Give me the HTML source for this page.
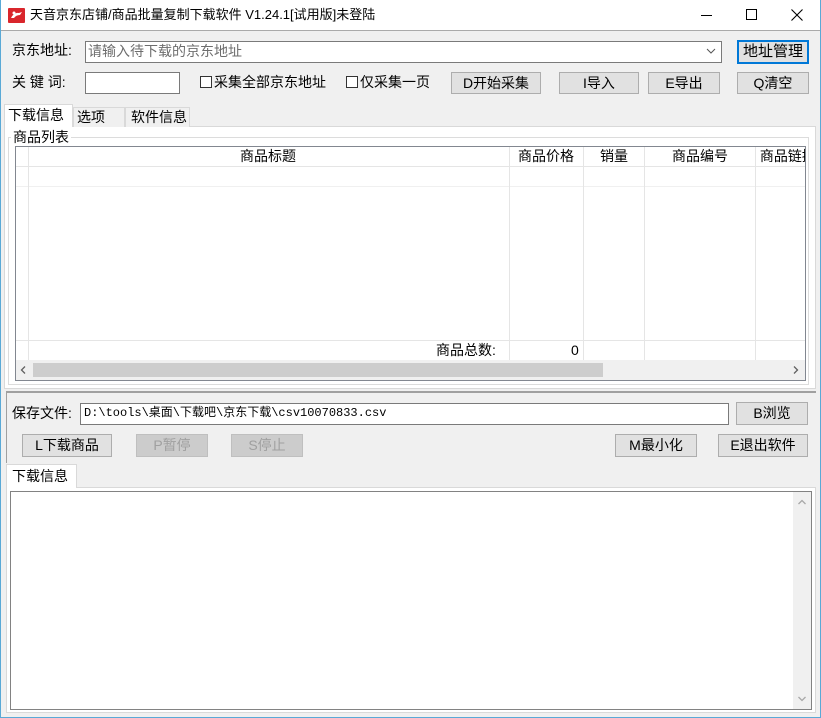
<!DOCTYPE html>
<html><head><meta charset="utf-8">
<style>
*{box-sizing:border-box;margin:0;padding:0}
body{width:821px;height:718px;overflow:hidden;background:#f0f0f0;font-family:"Liberation Sans","Noto Sans CJK SC",sans-serif;font-size:14px;color:#000;position:relative}
.a{position:absolute}
.t{position:absolute;white-space:nowrap;line-height:20px}
.btn{position:absolute;background:#e1e1e1;border:1px solid #adadad;text-align:center;line-height:20px;white-space:nowrap}
.dis{color:#a0a0a0;background:#cccccc;border-color:#bfbfbf}
.inp{position:absolute;background:#fff;border:1px solid #7a7a7a}
.cb{display:inline-block;width:12px;height:12px;border:1px solid #333;background:#fff;vertical-align:-1px;margin-right:2px}
.vl{position:absolute;width:1px;background:#f0f0f0}
</style></head><body>
<!-- window border -->
<div class="a" style="left:0;top:0;width:821px;height:718px;border:1px solid #5aa9d6;border-top:none"></div>
<!-- title bar -->
<div class="a" style="left:1px;top:0;width:819px;height:31px;background:#fff;border-bottom:1px solid #aaa"></div>
<div class="a" style="left:8px;top:8px;width:17px;height:15px;background:#d9262c;border-radius:1px"></div>
<svg class="a" style="left:9px;top:9px" width="15" height="13"><path d="M2 9 Q5 3 10 4 L13 3 L11 6 Q7 6 5 9 Z" fill="#fff"/><circle cx="5" cy="4" r="1.5" fill="#fff"/></svg>
<div class="t" style="left:30px;top:5px;font-size:13px">天音京东店铺/商品批量复制下载软件 V1.24.1[试用版]未登陆</div>
<div class="a" style="left:701px;top:15px;width:11px;height:1px;background:#000"></div>
<div class="a" style="left:746px;top:9px;width:11px;height:11px;border:1px solid #000"></div>
<svg class="a" style="left:791px;top:9px" width="12" height="12"><path d="M0.5 0.5L11.5 11.5M11.5 0.5L0.5 11.5" stroke="#000" stroke-width="1.1"/></svg>

<!-- row 1 -->
<div class="t" style="left:12px;top:40px">京东地址:</div>
<div class="inp" style="left:85px;top:41px;width:637px;height:22px;border-color:#7a7a7a"></div>
<div class="t" style="left:88px;top:41px;color:#6d6d6d">请输入待下载的京东地址</div>
<svg class="a" style="left:706px;top:48px" width="10" height="6"><path d="M1 1L5 5L9 1" stroke="#555" fill="none"/></svg>
<div class="btn" style="left:737px;top:40px;width:72px;height:24px;border:2px solid #0078d7;line-height:20px;font-size:15px">地址管理</div>

<!-- row 2 -->
<div class="t" style="left:12px;top:72px">关 键 词:</div>
<div class="inp" style="left:85px;top:72px;width:95px;height:22px"></div>
<div class="t" style="left:200px;top:72px"><span class="cb"></span>采集全部京东地址</div>
<div class="t" style="left:346px;top:72px"><span class="cb"></span>仅采集一页</div>
<div class="btn" style="left:451px;top:72px;width:90px;height:22px">D开始采集</div>
<div class="btn" style="left:559px;top:72px;width:80px;height:22px">I导入</div>
<div class="btn" style="left:648px;top:72px;width:72px;height:22px">E导出</div>
<div class="btn" style="left:737px;top:72px;width:72px;height:22px">Q清空</div>

<!-- tabs -->
<div class="a" style="left:4px;top:126px;width:812px;height:263px;background:#fff;border:1px solid #d9d9d9"></div>
<div class="a" style="left:73px;top:107px;width:52px;height:20px;border:1px solid #d9d9d9;border-bottom:none;background:#f0f0f0"></div>
<div class="a" style="left:125px;top:107px;width:65px;height:20px;border:1px solid #d9d9d9;border-bottom:none;background:#f0f0f0"></div>
<div class="a" style="left:4px;top:104px;width:69px;height:23px;border:1px solid #d9d9d9;border-bottom:none;background:#fff"></div>
<div class="t" style="left:8px;top:105px">下载信息</div>
<div class="t" style="left:77px;top:107px">选项</div>
<div class="t" style="left:131px;top:107px">软件信息</div>

<!-- group box -->
<div class="a" style="left:8px;top:137px;width:801px;height:248px;border:1px solid #dcdcdc"></div>
<div class="t" style="left:11px;top:127px;background:#fff;padding:0 2px">商品列表</div>

<!-- listview -->
<div class="a" style="left:15px;top:146px;width:791px;height:235px;border:1px solid #828790;background:#fff"></div>
<div class="a" style="left:16px;top:166px;width:789px;height:1px;background:#e5e5e5"></div>
<div class="a" style="left:16px;top:186px;width:789px;height:1px;background:#f0f0f0"></div>
<div class="vl" style="left:28px;top:147px;height:213px;background:#e5e5e5"></div>
<div class="vl" style="left:509px;top:147px;height:213px;background:#e5e5e5"></div>
<div class="vl" style="left:583px;top:147px;height:213px;background:#e5e5e5"></div>
<div class="vl" style="left:644px;top:147px;height:213px;background:#e5e5e5"></div>
<div class="vl" style="left:755px;top:147px;height:213px;background:#e5e5e5"></div>
<div class="a" style="left:16px;top:340px;width:789px;height:1px;background:#e5e5e5"></div>
<div class="t" style="left:240px;top:146px">商品标题</div>
<div class="t" style="left:518px;top:146px">商品价格</div>
<div class="t" style="left:600px;top:146px">销量</div>
<div class="t" style="left:672px;top:146px">商品编号</div>
<div class="a" style="left:756px;top:146px;width:49px;overflow:hidden;white-space:nowrap;line-height:20px">&nbsp;商品链接</div>
<div class="t" style="left:436px;top:340px">商品总数:</div>
<div class="t" style="left:571px;top:340px">0</div>
<!-- h scrollbar -->
<div class="a" style="left:16px;top:360px;width:789px;height:20px;background:#f0f0f0"></div>
<div class="a" style="left:33px;top:363px;width:570px;height:14px;background:#cdcdcd"></div>
<svg class="a" style="left:20px;top:366px" width="6" height="8"><path d="M5 0.5L1.5 4L5 7.5" stroke="#606060" stroke-width="1.3" fill="none"/></svg>
<svg class="a" style="left:793px;top:366px" width="6" height="8"><path d="M1 0.5L4.5 4L1 7.5" stroke="#606060" stroke-width="1.3" fill="none"/></svg>

<!-- splitter -->
<div class="a" style="left:6px;top:391px;width:810px;height:2px;background:#a0a0a0"></div>
<div class="a" style="left:6px;top:393px;width:1px;height:70px;background:#a0a0a0"></div>

<!-- save file -->
<div class="t" style="left:12px;top:403px">保存文件:</div>
<div class="inp" style="left:80px;top:403px;width:649px;height:22px"></div>
<div class="t" style="left:84px;top:403px;font-family:'Liberation Mono','Noto Sans CJK SC',monospace;font-size:12px">D:\tools\桌面\下载吧\京东下载\csv10070833.csv</div>
<div class="btn" style="left:736px;top:402px;width:72px;height:23px">B浏览</div>

<div class="btn" style="left:22px;top:434px;width:90px;height:23px">L下载商品</div>
<div class="btn dis" style="left:136px;top:434px;width:72px;height:23px">P暂停</div>
<div class="btn dis" style="left:231px;top:434px;width:72px;height:23px">S停止</div>
<div class="btn" style="left:615px;top:434px;width:82px;height:23px">M最小化</div>
<div class="btn" style="left:718px;top:434px;width:90px;height:23px">E退出软件</div>

<!-- bottom tab -->
<div class="a" style="left:6px;top:487px;width:810px;height:226px;background:#fff;border:1px solid #d9d9d9"></div>
<div class="a" style="left:6px;top:464px;width:71px;height:24px;border:1px solid #d9d9d9;border-bottom:none;background:#fff"></div>
<div class="t" style="left:12px;top:466px">下载信息</div>
<div class="a" style="left:10px;top:491px;width:802px;height:219px;border:1px solid #828282;background:#fff"></div>
<div class="a" style="left:793px;top:492px;width:18px;height:217px;background:#f0f0f0"></div>
<svg class="a" style="left:798px;top:499px" width="8" height="6"><path d="M0.5 5L4 1.5L7.5 5" stroke="#a8a8a8" stroke-width="1.3" fill="none"/></svg>
<svg class="a" style="left:798px;top:696px" width="8" height="6"><path d="M0.5 1L4 4.5L7.5 1" stroke="#a8a8a8" stroke-width="1.3" fill="none"/></svg>
</body></html>
